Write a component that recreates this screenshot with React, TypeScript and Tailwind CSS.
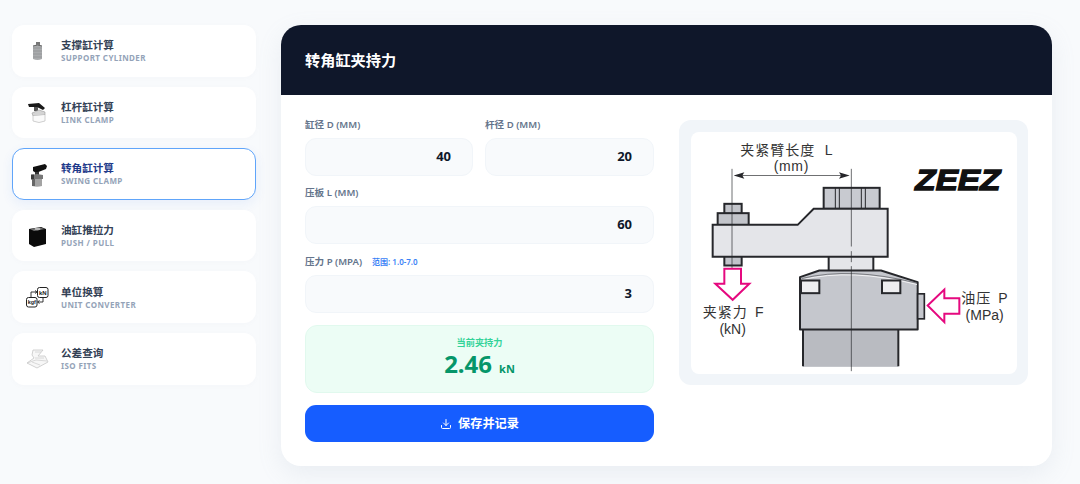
import React from "react";
import { Download } from "lucide-react";

const F = "font-['Noto_Sans','Noto_Sans_CJK_SC',sans-serif]";

const IconSupport = () => (
  <svg width="36" height="30" viewBox="0 0 36 30">
    <rect x="16" y="6" width="4" height="3" fill="#777" />
    <path d="M13 10 Q17.5 7 22 10 L22 23 Q17.5 25 13 23 Z" fill="#a9abad" />
    <path d="M13 12 h9 M13 15 h9 M13 18 h9 M13 21 h9" stroke="#8d8f92" strokeWidth="0.7" />
    <path d="M13 10 Q17.5 8 22 10" stroke="#666" fill="none" />
  </svg>
);
const IconLink = () => (
  <svg width="36" height="30" viewBox="0 0 36 30">
    <path d="M8 7 L19 6 L25 11 L23 13 L17 10 L9 10 Z" fill="#1a1a1a" />
    <rect x="14" y="10" width="4" height="4" fill="#555" />
    <path d="M12 16 L19 13 L25 15 L25 18 L13 19 Z" fill="#d4d4d4" stroke="#9a9a9a" strokeWidth="0.6" />
    <path d="M13 19 L13 24 Q19 27 25 24 L25 18" fill="#fafafa" stroke="#c4c4c4" strokeWidth="0.8" />
  </svg>
);
const IconSwing = () => (
  <svg width="36" height="30" viewBox="0 0 36 30">
    <path d="M13 8 L25 5 L27 7 L26 10 L16 14 L13 12 Z" fill="#111" />
    <rect x="15" y="13" width="4" height="3" fill="#333" />
    <path d="M11 16 L17 15 L23 16 L23 20 L11 20 Z" fill="#777" />
    <rect x="11" y="15.5" width="3" height="5" fill="#3a3a3a" />
    <path d="M12 20 h10 v7 q-5 1.5 -10 0 Z" fill="#a3a3a3" />
    <rect x="12" y="20" width="3" height="7" fill="#666" />
  </svg>
);
const IconPush = () => (
  <svg width="36" height="30" viewBox="0 0 36 30">
    <path d="M9 8 L21 6 L26 8 L26 23 L14 26 L9 23 Z" fill="#0b0b0b" />
    <path d="M10 8 L20 6.5 L25 8 L14 10 Z" fill="#6f6f6f" />
    <ellipse cx="17.5" cy="8" rx="3" ry="1.2" fill="#b5b5b5" />
  </svg>
);
const IconUnit = () => (
  <svg width="36" height="30" viewBox="0 0 36 30">
    <rect x="17.5" y="5.5" width="10.5" height="10" rx="2" fill="#fff" stroke="#222" strokeWidth="1" />
    <rect x="6.5" y="15.5" width="10.5" height="9.5" rx="2" fill="#fff" stroke="#222" strokeWidth="1" />
    <text x="22.8" y="13" fontSize="6" fontWeight="700" textAnchor="middle" fill="#222" fontFamily="Liberation Sans">kN</text>
    <text x="11.8" y="22" fontSize="5.5" fontWeight="700" textAnchor="middle" fill="#222" fontFamily="Liberation Sans">kgf</text>
    <path d="M11 15 V10 H16.5 M15 8.5 L17 10 L15 11.5 M23 16 V20 H18 M19.5 18.5 L17.5 20 L19.5 21.5" fill="none" stroke="#222" strokeWidth="0.9" />
  </svg>
);
const IconIso = () => (
  <svg width="36" height="30" viewBox="0 0 36 30">
    <path d="M13 6 H23 L18 12 H25 L28 18 L17 24 L7 19 L14 14 L12 11 Z" fill="#f7f7f7" stroke="#c6c6c6" strokeWidth="0.8" />
    <path d="M7 19 L16 16 L27 17 M12 18 L20 21 M15 8 H21 M15 14 L24 14" fill="none" stroke="#d0d0d0" strokeWidth="0.8" />
  </svg>
);

const items = [
  { t: "支撑缸计算", s: "SUPPORT CYLINDER", I: IconSupport },
  { t: "杠杆缸计算", s: "LINK CLAMP", I: IconLink },
  { t: "转角缸计算", s: "SWING CLAMP", I: IconSwing, active: true },
  { t: "油缸推拉力", s: "PUSH / PULL", I: IconPush },
  { t: "单位换算", s: "UNIT CONVERTER", I: IconUnit },
  { t: "公差查询", s: "ISO FITS", I: IconIso },
];

const Diagram = () => {
  const dark = "#26272b";
  const sans = "'Liberation Sans',sans-serif";
  return (
    <svg viewBox="30 36 978 723" className="w-full h-full block" fontFamily="'Noto Sans CJK SC','Noto Sans',sans-serif">
      <rect x="366" y="627" width="286" height="112" fill="#b9bbc1" />
      <path d="M366 627 V737 M652 627 V737" stroke={dark} strokeWidth="6" />
      <rect x="443" y="405" width="134" height="50" fill="#e4e5e9" stroke={dark} strokeWidth="6" />
      <path d="M357 470 L415 450 H600 L710 485 V627 H357 Z" fill="#c5c7cd" stroke={dark} strokeWidth="6" strokeLinejoin="round" />
      <path d="M362 478 Q510 442 708 492" fill="none" stroke="#f2f2f4" strokeWidth="3" />
      <path d="M362 474 Q510 438 708 488" fill="none" stroke="#55565b" strokeWidth="2" />
      <rect x="360" y="480" width="55" height="38" fill="#eeeef0" stroke={dark} strokeWidth="6" />
      <rect x="603" y="480" width="55" height="38" fill="#eeeef0" stroke={dark} strokeWidth="6" />
      <rect x="710" y="520" width="20" height="75" fill="#c5c7cd" stroke={dark} strokeWidth="5" />
      <rect x="428" y="202" width="168" height="63" fill="#c8cad0" stroke={dark} strokeWidth="6" />
      <path d="M463 202 V265 M475 202 V265 M541 202 V265 M553 202 V265" stroke={dark} strokeWidth="3" />
      <rect x="130" y="250" width="52" height="30" fill="#c2c4ca" stroke={dark} strokeWidth="6" />
      <rect x="110" y="278" width="93" height="36" fill="#c2c4ca" stroke={dark} strokeWidth="6" />
      <rect x="130" y="405" width="52" height="30" fill="#c2c4ca" stroke={dark} strokeWidth="6" />
      <path d="M95 313 H350 L398 265 H620 V409 H95 Z" fill="#e4e5e9" stroke={dark} strokeWidth="6" />
      <path d="M153 145 V445" stroke={dark} strokeWidth="2" />
      <path d="M511 145 V378 M511 392 V425 M511 437 V752" stroke={dark} strokeWidth="2" />
      <path d="M165 165 H500" stroke={dark} strokeWidth="2" />
      <path d="M158 165 L190 155 L184 165 L190 175 Z M506 165 L474 155 L480 165 L474 175 Z" fill={dark} />
      <path d="M130 445 H180 V490 H205 L155 538 L103 490 H130 Z" fill="#fff" stroke="#e5097f" strokeWidth="6" />
      <path d="M740 555 L790 507 V533 H835 V580 H790 V605 Z" fill="#fff" stroke="#e5097f" strokeWidth="6" />
      <g fill="#333" fontSize="42">
        <text x="178" y="102" letterSpacing="3">夹紧臂长度</text>
        <text x="431" y="102" fontFamily={sans}>L</text>
        <text x="331" y="152" textAnchor="middle" fontFamily={sans} letterSpacing="2">(mm)</text>
        <text x="65" y="590" letterSpacing="3">夹紧力</text>
        <text x="222" y="590" fontFamily={sans}>F</text>
        <text x="155" y="640" textAnchor="middle" fontFamily={sans}>(kN)</text>
        <text x="841" y="548" letterSpacing="3">油压</text>
        <text x="952" y="548" fontFamily={sans}>P</text>
        <text x="911" y="597" textAnchor="middle" fontFamily={sans}>(MPa)</text>
      </g>
      <text x="703" y="208" fontSize="88" fontWeight="700" fontStyle="italic" fill="#111" stroke="#111" strokeWidth="4" textLength="255" lengthAdjust="spacingAndGlyphs" fontFamily={sans}>ZEEZ</text>
    </svg>
  );
};

const Field = ({ value }: { value: string }) => (
  <div className="h-[38px] rounded-[11px] bg-[#f8fafc] border border-[#f1f5f9] flex items-center justify-end pr-[21px] text-[13px] font-bold text-[#0f172a]">
    {value}
  </div>
);
const Label = ({ children }: { children: React.ReactNode }) => (
  <div className="h-[12px] leading-[12px] text-[9.6px] font-semibold text-[#64748b] mb-[7px] whitespace-nowrap flex items-center">{children}</div>
);

export default function App() {
  return (
    <div className={`${F} w-[1080px] h-[484px] overflow-hidden bg-[#f8fafc] flex items-start pt-[25px] pl-[12px]`}>
      <aside className="w-[244px] flex flex-col gap-[10px] shrink-0">
        {items.map(({ t, s, I, active }) => (
          <div
            key={s}
            className={`h-[51.6px] rounded-[12px] bg-white flex items-center pl-[8px] gap-[5px] ${
              active
                ? "border border-[#60a5fa] shadow-[0_4px_12px_rgba(37,99,235,0.08)]"
                : "shadow-[0_1px_4px_rgba(148,163,184,0.04)]"
            }`}
          >
            <div className={`w-[36px] h-[30px] shrink-0 ${active ? "-ml-[1px]" : ""}`}><I /></div>
            <div className="flex flex-col">
              <span className={`text-[10.6px] leading-[14px] font-bold ${active ? "text-[#1e3a8a]" : "text-[#334155]"}`}>{t}</span>
              <span className="text-[8px] leading-[11px] font-bold tracking-[0.4px] text-[#94a3b8]">{s}</span>
            </div>
          </div>
        ))}
      </aside>
      <main className="ml-[25px] w-[771px] h-[441px] rounded-[20px] bg-white overflow-hidden shadow-[0_8px_24px_rgba(148,163,184,0.14)]">
        <header className="h-[70px] bg-[#0f172a] flex items-center pl-[24px] text-[15.2px] font-bold text-white">转角缸夹持力</header>
        <div className="grid grid-cols-2 gap-x-[25px] px-[24px] pt-[24px] items-start">
          <div className="flex flex-col">
            <div className="grid grid-cols-[168px_169px] gap-x-[12px]">
              <div><Label>缸径 D (MM)</Label><Field value="40" /></div>
              <div><Label>杆径 D (MM)</Label><Field value="20" /></div>
            </div>
            <div className="mt-[11px]"><Label>压板 L (MM)</Label><Field value="60" /></div>
            <div className="mt-[12px]">
              <Label>
                压力 P (MPA)
                <span className="ml-[10px] text-[8px] text-[#3b82f6]">范围: 1.0-7.0</span>
              </Label>
              <Field value="3" />
            </div>
            <div className="mt-[12px] h-[68px] rounded-[12px] bg-[#ecfdf5] border border-[#e1f9ee] flex flex-col items-center justify-center pt-[2px]">
              <span className="text-[9.2px] leading-[12px] font-semibold text-[#34d399]">当前夹持力</span>
              <div className="flex items-baseline gap-[7px] text-[#059669] font-bold leading-[30px]">
                <span className="text-[24px]">2.46</span>
                <span className="text-[11px]">kN</span>
              </div>
            </div>
            <button className="mt-[12px] h-[37px] pt-[1px] rounded-[11px] bg-[#165dff] flex items-center justify-center gap-[6px] text-white text-[12.2px] font-bold">
              <Download size={12} strokeWidth={2} />
              保存并记录
            </button>
          </div>
          <div className="h-[265px] mt-[1px] rounded-[12px] bg-[#f1f5f9] p-[11.5px]">
            <div className="h-full rounded-[8px] bg-white overflow-hidden"><Diagram /></div>
          </div>
        </div>
      </main>
    </div>
  );
}
